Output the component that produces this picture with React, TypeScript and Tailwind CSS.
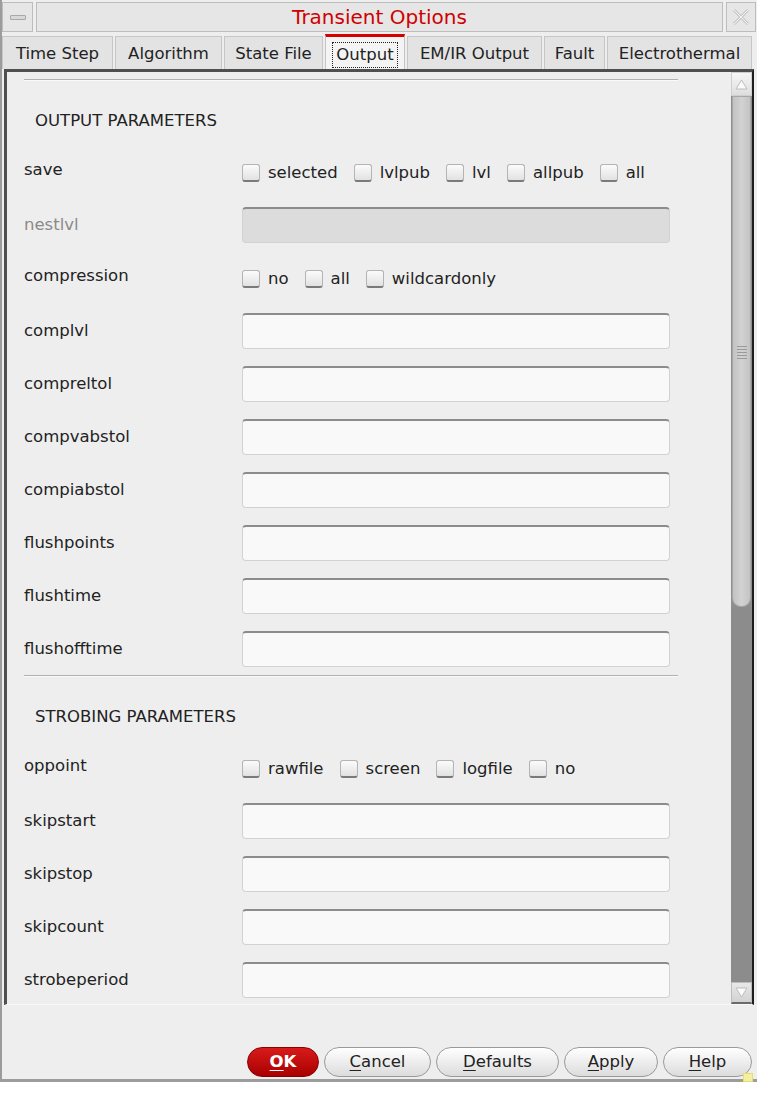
import React from "react";

const Checkbox = ({ label }: { label: string }) => (
  <div className="flex items-center gap-[8px]">
    <span className="block w-[18px] h-[18px] rounded-[3px] border border-[#b4b4b4] border-b-[2px] border-b-[#7a7a7a] bg-gradient-to-b from-[#fbfbfb] to-[#e2e2e2]" />
    <span>{label}</span>
  </div>
);

const TextBox = ({ disabled }: { disabled?: boolean }) => (
  <div
    className={
      "w-[428px] h-[36px] rounded-[4px] border border-[#d2d2d2] border-t-[2px] border-t-[#8c8c8c] " +
      (disabled ? "bg-[#dcdcdc]" : "bg-[#f9f9f9]")
    }
  />
);

const Row = ({
  label,
  children,
  dim,
  checks,
}: {
  label: string;
  children: React.ReactNode;
  dim?: boolean;
  checks?: boolean;
}) => (
  <div className="h-[53px] flex items-center shrink-0">
    <div
      className={
        "w-[218px] " +
        (checks ? "-mt-[3px] " : "mt-[1px] ") +
        (dim ? "text-[#8a8a8a]" : "text-[#222]")
      }
    >
      {label}
    </div>
    <div className={"flex items-center gap-[16px] " + (checks ? "mt-[3px]" : "")}>{children}</div>
  </div>
);

const Separator = () => (
  <div className="w-[654px] h-[2px] border-t border-t-[#b2b2b2] border-b border-b-[#fafafa] shrink-0" />
);

const Header = ({ text }: { text: string }) => (
  <div className="h-[64px] pt-[30px] pl-[11px] leading-[20px] text-[#222] shrink-0">{text}</div>
);

const tabs = [
  { t: "Time Step", w: "w-[111px]" },
  { t: "Algorithm", w: "w-[107px]" },
  { t: "State File", w: "w-[99px]" },
  { t: "Output", w: "w-[80px]", active: true },
  { t: "EM/IR Output", w: "w-[135px]" },
  { t: "Fault", w: "w-[61px]" },
  { t: "Electrothermal", w: "w-[145px]" },
];

const Btn = ({ label, w, red }: { label: string; w: string; red?: boolean }) => (
  <div
    className={
      w +
      " h-[30px] rounded-full flex items-center justify-center text-[16.5px] border " +
      (red
        ? "bg-gradient-to-b from-[#d81a1a] to-[#a80000] border-[#8a0000] text-white font-bold"
        : "bg-gradient-to-b from-[#ffffff] to-[#dcdcdc] border-[#9a9a9a] text-[#222]")
    }
  >
    <span>
      <span className="underline underline-offset-[3px]">{label[0]}</span>
      {label.slice(1)}
    </span>
  </div>
);

export default function App() {
  return (
    <div className="w-[765px] h-[1096px] bg-white font-['DejaVu_Sans',sans-serif] text-[16.5px] relative overflow-hidden">
      <div className="w-[757px] h-[1082px] bg-[#eeeeee] border-l-[2px] border-b-[3px] border-[#9c9c9c] flex flex-col">
        {/* Title bar */}
        <div className="h-[34px] flex gap-[3px] pt-[2px] pb-[2px] pr-[1px] shrink-0">
          <div className="w-[31px] border border-[#bdbdbd] bg-[#e6e6e6] flex items-center justify-center">
            <div className="w-[16px] h-[5px] border border-[#a8a8a8] bg-[#d8d8d8] rounded-[1px]" />
          </div>
          <div className="flex-1 border border-[#bdbdbd] bg-[#e6e6e6] flex items-center justify-center text-[20px] text-[#d00000]">
            Transient Options
          </div>
          <div className="w-[30px] border border-[#bdbdbd] bg-[#e6e6e6] flex items-center justify-center">
            <svg width="20" height="20" viewBox="0 0 20 20">
              <path d="M3 3 L17 17 M17 3 L3 17" stroke="#c8c8c8" strokeWidth="3" fill="none" />
              <path d="M3 3 L17 17 M17 3 L3 17" stroke="#f4f4f4" strokeWidth="1" fill="none" />
            </svg>
          </div>
        </div>
        {/* Tabs */}
        <div className="h-[35px] flex items-end gap-[2px] shrink-0">
          {tabs.map((tb) =>
            tb.active ? (
              <div
                key={tb.t}
                className={tb.w + " h-[35px] bg-[#f4f4f4] border-t-[3px] border-t-[#d40000] border-x border-x-[#c4c4c4] flex items-center justify-center pt-[3px]"}
              >
                <span className="border border-dotted border-[#222] px-[3px] leading-[24px] text-[#222]">{tb.t}</span>
              </div>
            ) : (
              <div
                key={tb.t}
                className={tb.w + " h-[33px] bg-[#e3e3e3] border border-[#c6c6c6] border-b-0 flex items-center justify-center text-[#222] pt-[3px]"}
              >
                {tb.t}
              </div>
            )
          )}
        </div>
        {/* Content panel */}
        <div className="ml-[2px] w-[750px] h-[936px] border-t-[3px] border-l-[3px] border-[#4f4f4f] border-r-[2px] border-r-[#1e1e1e] border-b border-b-[#f8f8f8] flex shrink-0">
          <div className="flex-1 overflow-hidden pl-[17px] pt-[7px] flex flex-col text-[#222]">
            <Separator />
            <Header text="OUTPUT PARAMETERS" />
            <Row label="save" checks>
              <Checkbox label="selected" />
              <Checkbox label="lvlpub" />
              <Checkbox label="lvl" />
              <Checkbox label="allpub" />
              <Checkbox label="all" />
            </Row>
            <Row label="nestlvl" dim>
              <TextBox disabled />
            </Row>
            <Row label="compression" checks>
              <Checkbox label="no" />
              <Checkbox label="all" />
              <Checkbox label="wildcardonly" />
            </Row>
            {["complvl", "compreltol", "compvabstol", "compiabstol", "flushpoints", "flushtime", "flushofftime"].map((l) => (
              <Row key={l} label={l}>
                <TextBox />
              </Row>
            ))}
            <Separator />
            <Header text="STROBING PARAMETERS" />
            <Row label="oppoint" checks>
              <Checkbox label="rawfile" />
              <Checkbox label="screen" />
              <Checkbox label="logfile" />
              <Checkbox label="no" />
            </Row>
            {["skipstart", "skipstop", "skipcount", "strobeperiod"].map((l) => (
              <Row key={l} label={l}>
                <TextBox />
              </Row>
            ))}
          </div>
          {/* Scrollbar */}
          <div className="w-[21px] flex flex-col shrink-0 bg-[#e8e8e8]">
            <div className="h-[24px] shrink-0 border border-[#cfcfcf] bg-gradient-to-b from-[#f6f6f6] to-[#dedede] flex items-center justify-center">
              <svg width="13" height="11" viewBox="0 0 13 11">
                <path d="M6.5 1 L12 10 L1 10 Z" fill="#fafafa" stroke="#bdbdbd" strokeWidth="1" />
              </svg>
            </div>
            <div className="h-[511px] shrink-0 bg-[#8e8e8e]">
              <div className="h-full mx-[1px] rounded-b-[9px] bg-gradient-to-r from-[#c2c2c2] via-[#d2d2d2] to-[#c4c4c4] border border-[#a8a8a8] flex flex-col items-center pt-[249px] gap-[2px]">
                <div className="w-[10px] h-[1px] bg-[#9a9a9a]" />
                <div className="w-[10px] h-[1px] bg-[#9a9a9a]" />
                <div className="w-[10px] h-[1px] bg-[#9a9a9a]" />
                <div className="w-[10px] h-[1px] bg-[#9a9a9a]" />
                <div className="w-[10px] h-[1px] bg-[#9a9a9a]" />
              </div>
            </div>
            <div className="flex-1 bg-[#8c8c8c]" />
            <div className="h-[22px] shrink-0 border border-[#bcbcbc] border-b-[2px] border-b-[#6a6a6a] bg-gradient-to-b from-[#e8e8e8] to-[#d2d2d2] flex items-center justify-center">
              <svg width="13" height="11" viewBox="0 0 13 11">
                <path d="M1 1 L12 1 L6.5 10 Z" fill="#fafafa" stroke="#bdbdbd" strokeWidth="1" />
              </svg>
            </div>
          </div>
        </div>
        {/* Footer */}
        <div className="flex-1 flex items-end justify-end gap-[5px] pr-[5px] pb-[2px]">
          <Btn label="OK" w="w-[72px]" red />
          <Btn label="Cancel" w="w-[107px]" />
          <Btn label="Defaults" w="w-[123px]" />
          <Btn label="Apply" w="w-[94px]" />
          <Btn label="Help" w="w-[89px]" />
        </div>
      </div>
      <div className="absolute left-[743px] top-[1073px] w-[10px] h-[9px] bg-[#f4f0a0] border border-[#e6dc70]" />
    </div>
  );
}
